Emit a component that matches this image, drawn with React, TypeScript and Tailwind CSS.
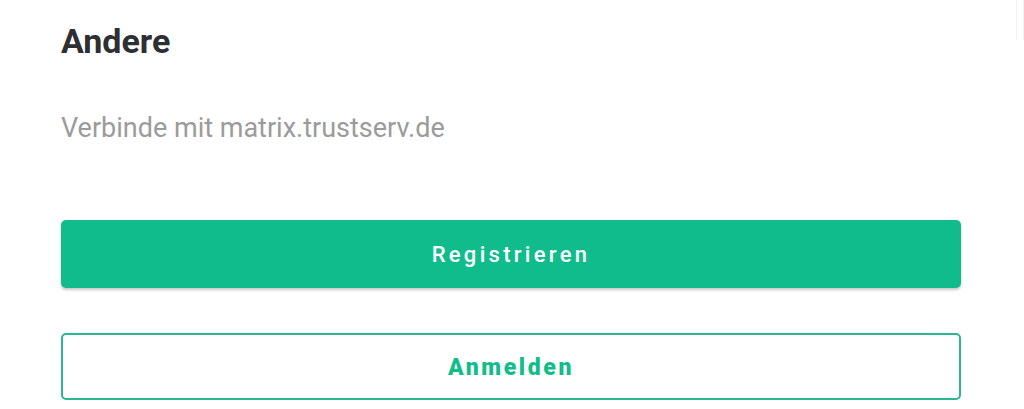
export default function App() {
  return (
    <div className="relative min-h-[409px] w-full bg-white font-['Roboto',sans-serif] overflow-hidden">
      <div className="ml-[61px] w-[900px] pt-[21px]">
        <h1 className="text-[34px] leading-[40px] font-bold text-[#2e2f32]">Andere</h1>
        <p className="mt-[51px] text-[27px] leading-[32px] text-[#9b9b9b]">Verbinde mit matrix.trustserv.de</p>
        <button className="mt-[76px] flex h-[68px] w-full items-center justify-center rounded-[5px] bg-[#10bc8b] pt-[1px] text-[22px] font-medium tracking-[3.3px] text-white shadow-[0_2px_3px_rgba(0,0,0,0.22)]">
          Registrieren
        </button>
        <button className="mt-[45px] flex h-[67px] w-full items-center justify-center rounded-[5px] border-2 border-[#2bb88f] bg-white pt-[4px] text-[23px] font-black tracking-[2.6px] text-[#12bc8b]">
          Anmelden
        </button>
      </div>
      <div className="absolute right-0 top-0 h-[40px] w-[8px] border-x border-[#f2f2f2]" />
    </div>
  );
}
